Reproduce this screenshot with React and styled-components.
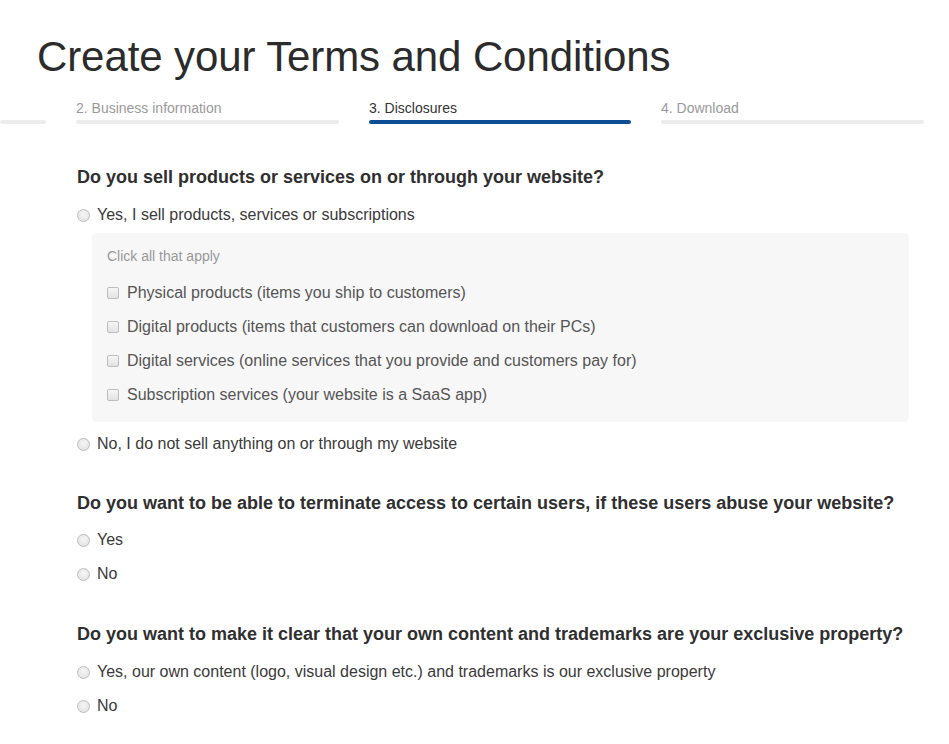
import React from "react";
import styled, { createGlobalStyle } from "styled-components";

const Global = createGlobalStyle`
  html, body { margin: 0; padding: 0; background: #fff; }
  body { font-family: "Liberation Sans", Arial, sans-serif; color: #333; }
`;

const Page = styled.div`
  width: 949px;
  overflow: hidden;
`;

const Title = styled.h1`
  margin: 0;
  padding: 30px 0 0 37px;
  font-size: 42px;
  font-weight: 400;
  line-height: 54px;
  color: #2b2b2b;
  letter-spacing: -0.1px;
`;

const Steps = styled.div`
  display: grid;
  grid-template-columns: 46px 263px 262px 263px;
  column-gap: 30px;
  margin-top: 16px;
`;

const Step = styled.div`
  display: flex;
  flex-direction: column;
  gap: 3px;
`;

const StepLabel = styled.div`
  font-size: 14px;
  line-height: 17px;
  height: 17px;
  color: ${(p) => (p.$active ? "#333" : "#999")};
  white-space: nowrap;
  overflow: hidden;
`;

const StepBar = styled.div`
  height: 4px;
  border-radius: 2px;
  background: ${(p) => (p.$active ? "#0c4d94" : "#ececec")};
`;

const Content = styled.div`
  padding: 0 0 0 77px;
  width: 832px;
`;

const Question = styled.section`
  margin-top: ${(p) => p.$top}px;
`;

const Heading = styled.h2`
  margin: 0 0 ${(p) => p.$gap}px;
  font-size: 18px;
  line-height: 24px;
  font-weight: 700;
  color: #2f2f2f;
`;

const Option = styled.label`
  display: flex;
  align-items: center;
  gap: ${(p) => p.$gap || 7}px;
  height: 34px;
  font-size: 16px;
  color: #3a3a3a;
`;

const Radio = styled.span`
  width: 11px;
  height: 11px;
  border-radius: 50%;
  border: 1px solid #bdbdbd;
  background: radial-gradient(circle at 50% 40%, #f6f6f6 0%, #dedede 100%);
  flex: none;
`;

const Box = styled.div`
  margin: 1px 0 5px 15px;
  background: #f7f7f7;
  border-radius: 5px;
  padding: 12px 15px 10px;
`;

const Hint = styled.div`
  font-size: 14px;
  line-height: 22px;
  color: #999;
  margin-bottom: 9px;
`;

const Check = styled.span`
  width: 10px;
  height: 10px;
  border-radius: 2px;
  border: 1px solid #bdbdbd;
  background: linear-gradient(#f6f6f6, #e2e2e2);
  flex: none;
`;

const CheckOption = styled(Option)`
  color: #555;
`;

const questions = [
  {
    top: 41,
    gap: 9,
    q: "Do you sell products or services on or through your website?",
    opts: ["Yes, I sell products, services or subscriptions", "No, I do not sell anything on or through my website"],
    box: true,
  },
  {
    top: 30,
    gap: 8,
    q: "Do you want to be able to terminate access to certain users, if these users abuse your website?",
    opts: ["Yes", "No"],
  },
  {
    top: 31,
    gap: 9,
    q: "Do you want to make it clear that your own content and trademarks are your exclusive property?",
    opts: ["Yes, our own content (logo, visual design etc.) and trademarks is our exclusive property", "No"],
  },
];

const checks = [
  "Physical products (items you ship to customers)",
  "Digital products (items that customers can download on their PCs)",
  "Digital services (online services that you provide and customers pay for)",
  "Subscription services (your website is a SaaS app)",
];

export default function App() {
  return (
    <Page>
      <Global />
      <Title>Create your Terms and Conditions</Title>
      <Steps>
        <Step>
          <StepLabel />
          <StepBar />
        </Step>
        <Step>
          <StepLabel>2. Business information</StepLabel>
          <StepBar />
        </Step>
        <Step>
          <StepLabel $active>3. Disclosures</StepLabel>
          <StepBar $active />
        </Step>
        <Step>
          <StepLabel>4. Download</StepLabel>
          <StepBar />
        </Step>
      </Steps>
      <Content>
        {questions.map((item, i) => (
          <Question key={i} $top={item.top}>
            <Heading $gap={item.gap}>{item.q}</Heading>
            <Option>
              <Radio />
              {item.opts[0]}
            </Option>
            {item.box && (
              <Box>
                <Hint>Click all that apply</Hint>
                {checks.map((c) => (
                  <CheckOption key={c} $gap={8}>
                    <Check />
                    {c}
                  </CheckOption>
                ))}
              </Box>
            )}
            <Option>
              <Radio />
              {item.opts[1]}
            </Option>
          </Question>
        ))}
      </Content>
    </Page>
  );
}
